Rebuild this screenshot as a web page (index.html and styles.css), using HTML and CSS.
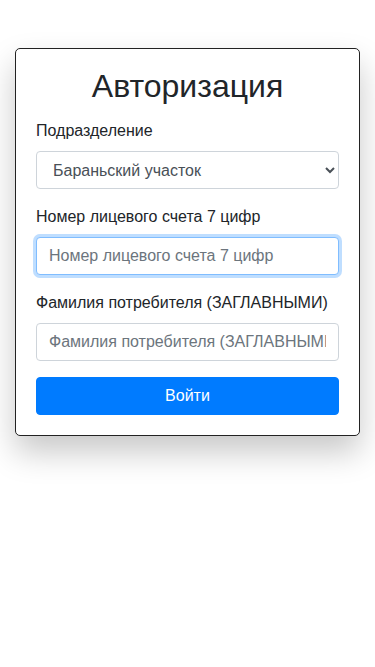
FILE: index.html
```html
<!DOCTYPE html>
<html lang="ru">
<head>
    <meta charset="UTF-8">
    <meta name="viewport" content="width=device-width, initial-scale=1.0">
    <title>Авторизация</title>
    <link rel="stylesheet" href="styles.css">
</head>
<body>
    <div class="container">
        <form class="auth-card">
            <h2 class="auth-title">Авторизация</h2>
            <div class="form-group">
                <label for="division">Подразделение</label>
                <select id="division" class="form-control">
                    <option>Бараньский участок</option>
                </select>
            </div>
            <div class="form-group">
                <label for="account">Номер лицевого счета 7 цифр</label>
                <input id="account" class="form-control is-focus" type="text" placeholder="Номер лицевого счета 7 цифр">
            </div>
            <div class="form-group">
                <label for="surname">Фамилия потребителя (ЗАГЛАВНЫМИ)</label>
                <input id="surname" class="form-control" type="text" placeholder="Фамилия потребителя (ЗАГЛАВНЫМИ)">
            </div>
            <button type="button" class="btn-primary">Войти</button>
        </form>
    </div>
</body>
</html>
```

FILE: styles.css
```css
* {
    box-sizing: border-box;
}
body {
    margin: 0;
    font-family: "Liberation Sans", Arial, sans-serif;
    font-size: 16px;
    line-height: 1.5;
    color: #212529;
    background: #fff;
}
.container {
    padding: 48px 15px 120px;
}
.auth-card {
    width: 345px;
    margin: 0 auto;
    padding: 18px 20px 20px;
    border: 1px solid #222;
    border-radius: 5px;
    background: #fff;
    box-shadow: 0 1rem 2rem rgba(0, 0, 0, 0.22);
}
.auth-title {
    margin: 0 0 14px;
    font-size: 32px;
    font-weight: 400;
    line-height: 1.2;
    text-align: center;
}
.form-group {
    margin-bottom: 16px;
}
.form-group label {
    display: block;
    margin-bottom: 8px;
}
.form-control {
    display: block;
    width: 100%;
    height: 38px;
    padding: 6px 12px;
    font-family: inherit;
    font-size: 16px;
    line-height: 1.5;
    color: #495057;
    background: #fff;
    border: 1px solid #ced4da;
    border-radius: 4px;
    outline: none;
}
.form-control::placeholder {
    color: #6c757d;
}
.form-control.is-focus {
    border-color: #80bdff;
    box-shadow: 0 0 0 3px rgba(0, 123, 255, 0.25);
}
.btn-primary {
    display: block;
    width: 100%;
    height: 38px;
    padding: 6px 12px;
    font-family: inherit;
    font-size: 16px;
    line-height: 1.5;
    color: #fff;
    background: #007bff;
    border: 1px solid #007bff;
    border-radius: 4px;
}
```
